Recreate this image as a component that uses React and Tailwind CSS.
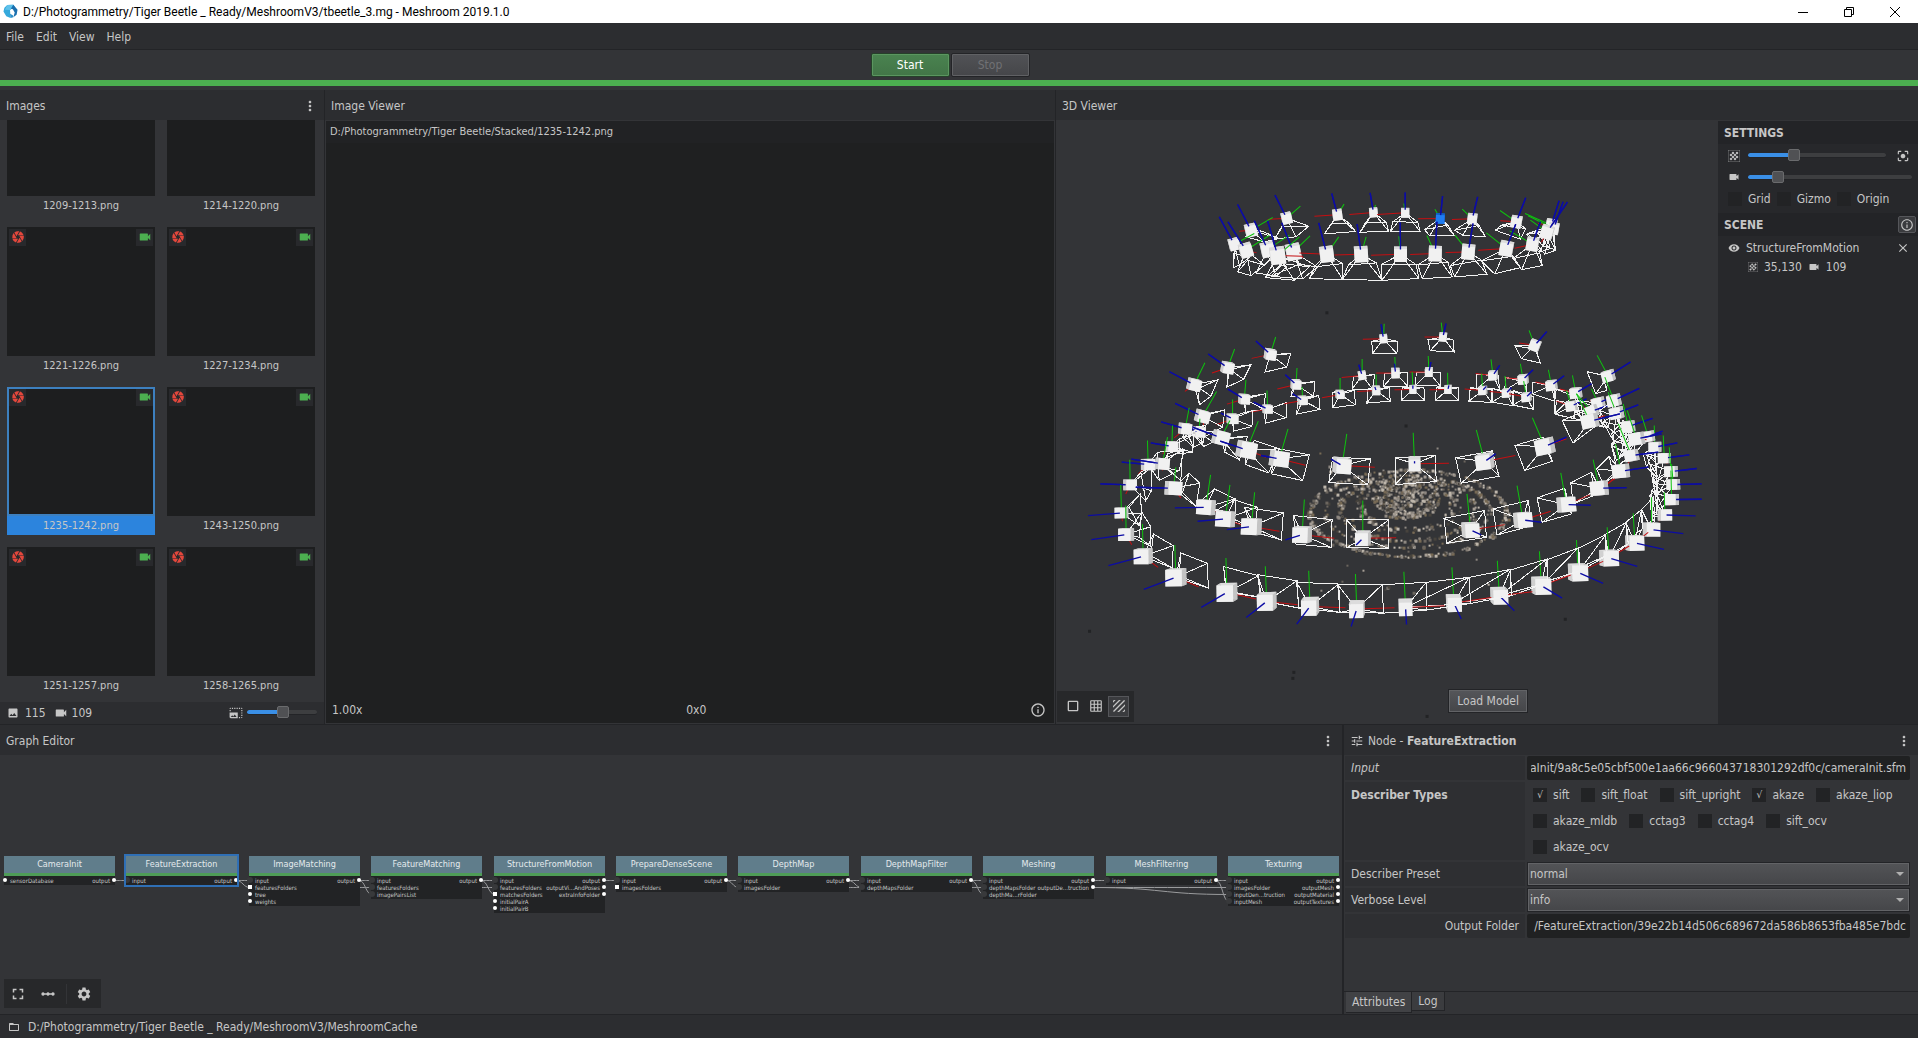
import { useEffect, useRef, useState } from 'react'
import {
  MdCamera, MdCenterFocusStrong, MdClose, MdCropSquare, MdFolderOpen, MdFullscreen, MdGrain, MdGridOn, MdImage,
  MdInfoOutline, MdLinearScale, MdMoreVert, MdPhotoSizeSelectLarge, MdSettings, MdTexture, MdTune, MdVideocam,
  MdVisibility,
} from 'react-icons/md'

const IMAGES = [
  '1209-1213.png', '1214-1220.png',
  '1221-1226.png', '1227-1234.png',
  '1235-1242.png', '1243-1250.png',
  '1251-1257.png', '1258-1265.png',
]

const DESCRIBERS = [
  'sift', 'sift_float', 'sift_upright', 'akaze', 'akaze_liop',
  'akaze_mldb', 'cctag3', 'cctag4', 'sift_ocv', 'akaze_ocv',
]

// input pins: '*' = list pin, '-' = already connected
const NODES = [
  { name: 'CameraInit', inputs: ['sensorDatabase'], outputs: ['output'] },
  { name: 'FeatureExtraction', inputs: ['-input'], outputs: ['output'] },
  { name: 'ImageMatching', inputs: ['-input', '*featuresFolders', 'tree', 'weights'], outputs: ['output'] },
  { name: 'FeatureMatching', inputs: ['-input', '-featuresFolders', '-imagePairsList'], outputs: ['output'] },
  {
    name: 'StructureFromMotion',
    inputs: ['-input', '-featuresFolders', '*matchesFolders', 'initialPairA', 'initialPairB'],
    outputs: ['output', 'outputVi...AndPoses', 'extraInfoFolder'],
  },
  { name: 'PrepareDenseScene', inputs: ['-input', '*imagesFolders'], outputs: ['output'] },
  { name: 'DepthMap', inputs: ['-input', '-imagesFolder'], outputs: ['output'] },
  { name: 'DepthMapFilter', inputs: ['-input', '-depthMapsFolder'], outputs: ['output'] },
  { name: 'Meshing', inputs: ['-input', '-depthMapsFolder', '-depthMa...rFolder'], outputs: ['output', 'outputDe...truction'] },
  { name: 'MeshFiltering', inputs: ['-input'], outputs: ['output'] },
  {
    name: 'Texturing',
    inputs: ['-input', '-imagesFolder', '-inputDen...truction', '-inputMesh'],
    outputs: ['output', 'outputMesh', 'outputMaterial', 'outputTextures'],
  },
]

// [from node, output row, to node, input row]
const EDGES = [
  [0, 0, 1, 0], [1, 0, 2, 0], [1, 0, 2, 1], [2, 0, 3, 0], [2, 0, 3, 2], [2, 1, 3, 1],
  [3, 0, 4, 0], [3, 0, 4, 2], [3, 1, 4, 1], [4, 0, 5, 0], [5, 0, 6, 0], [5, 0, 6, 1],
  [6, 0, 7, 0], [6, 0, 7, 1], [6, 1, 7, 1], [7, 0, 8, 0], [7, 0, 8, 2], [7, 1, 8, 1],
  [8, 0, 9, 0], [8, 1, 10, 1], [8, 1, 10, 2], [9, 0, 10, 0], [9, 0, 10, 3],
]

const nodeX = (i) => Math.round(4 + i * 122.4)

/*
 * Cameras of the reconstruction, in thirds of a viewport pixel:
 * [x, y, size, blue axis end, green axis end, red axis end, four frustum corners]
 */
const TOP_RING = [
  [262, 144, 34, 227, 75, 303, 108, 205, 148, 250, 168, 328, 168, 290, 200, 226, 206],
  [414, 134, 32, 397, 70, 434, 102, 345, 138, 398, 160, 450, 160, 468, 184, 375, 191],
  [522, 127, 28, 512, 68, 528, 104, 450, 133, 498, 158, 560, 156, 568, 184, 482, 186],
  [617, 128, 28, 617, 67, 613, 100, 533, 133, 580, 155, 655, 156, 662, 184, 573, 184],
  [722, 145, 30, 729, 78, 706, 117, 656, 146, 675, 178, 745, 165, 763, 195, 690, 197],
  [818, 146, 32, 834, 80, 788, 117, 757, 148, 765, 180, 838, 166, 858, 200, 790, 195],
  [950, 155, 36, 978, 83, 901, 121, 902, 152, 905, 165, 978, 175, 962, 207, 887, 180],
  [1055, 165, 36, 1078, 92, 976, 130, 1015, 160, 985, 190, 1040, 185, 1068, 240, 1035, 252],
  [1062, 175, 34, 1090, 95, 985, 137, 1030, 170, 1010, 205, 1060, 195, 1066, 238, 1030, 228],
  [1042, 186, 40, 1103, 96, 992, 150, 1025, 216, 980, 192, 1010, 182, 1050, 236, 1022, 245],
  [998, 222, 40, 1022, 155, 930, 182, 945, 234, 940, 265, 1020, 248, 1028, 286, 966, 298],
  [920, 235, 44, 948, 162, 860, 188, 836, 240, 845, 272, 940, 258, 962, 292, 885, 311],
  [155, 180, 38, 115, 103, 220, 142, 120, 183, 140, 200, 185, 182, 240, 205, 195, 215],
  [105, 222, 36, 60, 140, 165, 190, 110, 228, 103, 292, 105, 250, 150, 262, 120, 285],
  [140, 240, 42, 86, 155, 210, 196, 172, 248, 115, 305, 145, 270, 195, 285, 155, 316],
  [205, 238, 44, 165, 152, 270, 195, 240, 250, 170, 308, 210, 270, 262, 290, 230, 318],
  [282, 245, 48, 247, 158, 332, 197, 312, 262, 215, 318, 300, 282, 354, 290, 310, 326],
  [235, 256, 50, 205, 152, 300, 200, 310, 258, 198, 322, 250, 280, 330, 290, 285, 330],
  [382, 252, 46, 358, 158, 418, 200, 300, 248, 345, 290, 430, 280, 430, 328, 330, 325],
  [485, 252, 46, 473, 162, 500, 200, 405, 254, 447, 284, 530, 278, 548, 330, 428, 328],
  [603, 252, 44, 602, 157, 598, 198, 515, 255, 545, 283, 650, 283, 658, 325, 548, 330],
  [707, 250, 44, 712, 155, 682, 196, 632, 253, 655, 284, 745, 276, 758, 320, 668, 325],
  [806, 245, 44, 820, 160, 766, 195, 738, 247, 752, 286, 846, 270, 862, 312, 765, 320],
]

const LEFT_RINGS = [
  [912, 85, 26, 905, 42, 914, 40, 850, 87, 877, 93, 955, 93, 952, 130, 879, 130],
  [573, 132, 34, 530, 92, 589, 80, 517, 144, 572, 135, 634, 130, 622, 170, 557, 185],
  [445, 172, 36, 387, 131, 466, 116, 398, 188, 450, 178, 515, 163, 493, 207, 443, 230],
  [345, 223, 38, 271, 184, 377, 157, 317, 243, 355, 235, 416, 208, 395, 257, 361, 283],
  [650, 222, 30, 618, 193, 653, 173, 594, 236, 642, 218, 706, 214, 703, 258, 635, 258],
  [495, 266, 32, 446, 236, 500, 208, 443, 281, 490, 262, 558, 250, 555, 297, 500, 305],
  [848, 195, 26, 838, 163, 848, 146, 787, 201, 822, 199, 885, 193, 880, 237, 818, 236],
  [948, 188, 28, 945, 160, 946, 140, 890, 188, 915, 190, 983, 187, 985, 228, 912, 228],
  [565, 296, 28, 523, 275, 563, 240, 515, 305, 555, 300, 620, 277, 620, 322, 558, 338],
  [670, 270, 28, 640, 250, 668, 230, 615, 280, 655, 268, 718, 255, 722, 297, 652, 311],
  [782, 252, 26, 775, 245, 782, 203, 728, 262, 760, 245, 825, 240, 828, 283, 760, 292],
  [890, 240, 26, 886, 230, 890, 192, 833, 243, 866, 235, 930, 232, 932, 272, 862, 278],
  [460, 325, 32, 425, 308, 460, 267, 412, 343, 465, 315, 520, 300, 518, 348, 462, 362],
  [370, 318, 40, 288, 279, 412, 243, 373, 345, 385, 310, 437, 298, 430, 350, 375, 380],
  [360, 365, 34, 310, 345, 362, 325, 350, 380, 340, 370, 405, 362, 400, 395, 373, 408],
  [318, 355, 36, 246, 334, 330, 292, 285, 382, 310, 380, 378, 345, 372, 395, 343, 410],
  [278, 408, 34, 215, 397, 280, 345, 250, 430, 300, 385, 345, 372, 340, 425, 300, 430],
  [425, 382, 46, 340, 350, 452, 330, 440, 400, 440, 385, 505, 378, 480, 448, 437, 425],
  [502, 418, 54, 423, 392, 537, 332, 560, 440, 525, 390, 600, 415, 568, 487, 498, 462],
  [600, 445, 52, 545, 435, 626, 355, 678, 464, 585, 412, 690, 433, 670, 510, 577, 490],
  [207, 462, 38, 128, 455, 205, 390, 178, 490, 235, 425, 315, 420, 300, 480, 240, 510],
  [250, 460, 38, 157, 446, 265, 380, 250, 480, 265, 430, 310, 415, 305, 510, 268, 480],
  [153, 523, 36, 64, 520, 152, 448, 140, 550, 185, 485, 217, 470, 217, 540, 200, 570],
  [283, 533, 46, 170, 530, 290, 470, 305, 562, 330, 488, 362, 518, 350, 588, 310, 545],
  [788, 465, 50, 755, 446, 802, 370, 886, 470, 760, 440, 873, 445, 865, 523, 748, 516],
  [127, 607, 36, 27, 615, 125, 523, 130, 632, 183, 550, 188, 610, 180, 645, 150, 590],
  [141, 672, 42, 37, 687, 140, 585, 158, 702, 188, 605, 215, 648, 213, 705, 180, 680],
  [380, 590, 50, 287, 592, 394, 493, 410, 602, 405, 535, 468, 565, 470, 610, 350, 585],
  [438, 625, 52, 355, 632, 452, 523, 500, 648, 465, 568, 535, 590, 525, 655, 410, 600],
  [516, 648, 54, 443, 657, 526, 545, 600, 662, 495, 590, 612, 607, 606, 688, 545, 670],
  [668, 672, 52, 618, 688, 675, 567, 765, 683, 643, 615, 758, 627, 755, 710, 648, 700],
  [850, 683, 44, 830, 703, 850, 570, 950, 681, 802, 628, 928, 628, 928, 713, 802, 711],
  [192, 737, 50, 88, 765, 190, 640, 237, 770, 223, 670, 282, 705, 280, 772, 215, 735],
  [290, 800, 56, 194, 836, 287, 703, 358, 828, 305, 727, 385, 758, 387, 832, 300, 795],
  [443, 845, 56, 366, 890, 440, 742, 530, 865, 433, 768, 538, 795, 545, 860, 440, 840],
  [562, 872, 54, 501, 920, 558, 767, 655, 882, 535, 792, 653, 810, 658, 892, 545, 870],
  [692, 887, 52, 652, 940, 688, 780, 798, 891, 652, 815, 778, 820, 782, 905, 658, 892],
  [832, 895, 48, 815, 947, 828, 790, 945, 891, 775, 822, 908, 822, 912, 907, 782, 905],
]

const RIGHT_RINGS = [
  [160, 80, 26, 169, 40, 155, 37, 105, 80, 115, 88, 190, 88, 194, 125, 122, 121],
  [435, 105, 34, 471, 64, 418, 60, 388, 98, 376, 107, 436, 115, 452, 158, 395, 145],
  [655, 197, 36, 722, 155, 622, 135, 640, 190, 592, 184, 640, 195, 650, 240, 618, 250],
  [118, 185, 26, 124, 155, 116, 137, 60, 185, 80, 187, 152, 187, 152, 227, 78, 225],
  [310, 195, 28, 330, 165, 304, 147, 258, 189, 260, 192, 325, 195, 330, 236, 262, 235],
  [400, 207, 30, 430, 178, 392, 160, 348, 202, 348, 202, 410, 215, 412, 250, 345, 240],
  [485, 225, 32, 523, 196, 476, 178, 437, 215, 430, 215, 500, 232, 495, 272, 427, 250],
  [70, 237, 24, 70, 225, 68, 185, 15, 238, 38, 232, 103, 230, 106, 270, 35, 270],
  [175, 237, 24, 178, 225, 174, 187, 120, 238, 140, 232, 206, 232, 206, 270, 138, 270],
  [279, 240, 26, 290, 228, 276, 190, 225, 236, 242, 232, 305, 236, 306, 276, 238, 272],
  [350, 248, 26, 365, 232, 346, 197, 300, 243, 310, 235, 368, 245, 370, 286, 308, 275],
  [410, 260, 28, 425, 245, 402, 212, 358, 250, 370, 240, 430, 258, 430, 296, 370, 284],
  [558, 248, 34, 605, 220, 548, 195, 510, 236, 495, 235, 565, 262, 552, 325, 495, 310],
  [545, 287, 32, 590, 265, 530, 240, 500, 272, 500, 270, 575, 285, 580, 330, 496, 312],
  [625, 278, 36, 690, 250, 605, 235, 600, 270, 560, 270, 620, 290, 640, 350, 575, 330],
  [605, 302, 36, 670, 280, 560, 250, 580, 290, 555, 300, 620, 320, 650, 350, 590, 335],
  [672, 270, 38, 748, 234, 645, 200, 665, 260, 630, 300, 680, 320, 700, 390, 655, 350],
  [680, 308, 38, 745, 283, 655, 245, 670, 300, 640, 335, 695, 345, 705, 400, 670, 390],
  [715, 348, 36, 788, 324, 700, 280, 720, 360, 665, 370, 700, 330, 720, 420, 690, 440],
  [795, 410, 34, 862, 397, 793, 345, 775, 390, 760, 430, 795, 445, 800, 500, 770, 470],
  [823, 443, 34, 898, 433, 820, 375, 832, 460, 770, 430, 800, 460, 800, 530, 785, 480],
  [843, 483, 36, 920, 474, 838, 410, 840, 500, 780, 460, 805, 500, 800, 560, 790, 520],
  [850, 522, 36, 935, 520, 845, 460, 850, 540, 790, 500, 800, 520, 803, 590, 795, 550],
  [845, 567, 38, 935, 566, 843, 480, 838, 585, 785, 540, 800, 525, 803, 600, 790, 610],
  [825, 613, 38, 917, 616, 823, 545, 808, 632, 780, 555, 797, 540, 800, 610, 785, 620],
  [785, 657, 46, 880, 669, 785, 560, 765, 675, 755, 597, 790, 560, 795, 625, 760, 650],
  [775, 378, 34, 818, 362, 755, 315, 770, 385, 690, 360, 730, 380, 735, 430, 700, 420],
  [740, 385, 42, 815, 370, 712, 300, 770, 388, 665, 400, 700, 370, 720, 420, 680, 450],
  [725, 435, 38, 805, 425, 685, 340, 715, 460, 665, 405, 700, 385, 715, 440, 680, 470],
  [600, 332, 46, 690, 310, 560, 250, 645, 315, 517, 330, 590, 300, 620, 345, 550, 398],
  [693, 482, 46, 775, 470, 677, 400, 655, 520, 620, 475, 658, 438, 670, 490, 640, 520],
  [628, 533, 48, 710, 531, 610, 447, 675, 505, 543, 517, 605, 485, 612, 555, 550, 580],
  [530, 582, 50, 603, 584, 513, 487, 600, 553, 442, 562, 525, 533, 545, 610, 457, 635],
  [400, 628, 50, 455, 635, 382, 525, 483, 602, 310, 595, 415, 570, 428, 645, 322, 673],
  [243, 658, 48, 275, 673, 232, 550, 345, 642, 163, 623, 285, 600, 290, 680, 172, 698],
  [75, 460, 40, 75, 452, 71, 367, 178, 458, 18, 442, 137, 435, 140, 513, 17, 522],
  [285, 453, 50, 318, 430, 260, 358, 377, 435, 198, 442, 308, 421, 328, 497, 215, 518],
  [465, 408, 52, 530, 380, 428, 322, 530, 385, 376, 405, 460, 380, 488, 452, 405, 480],
  [735, 697, 50, 822, 716, 730, 608, 775, 665, 708, 635, 755, 597, 757, 655, 712, 690],
  [658, 742, 52, 742, 767, 652, 650, 718, 706, 645, 672, 710, 635, 715, 700, 650, 735],
  [565, 785, 54, 640, 818, 560, 688, 640, 752, 567, 712, 648, 672, 650, 735, 570, 770],
  [455, 825, 54, 517, 862, 449, 722, 543, 793, 470, 748, 565, 712, 570, 780, 475, 810],
  [329, 855, 50, 374, 900, 323, 750, 428, 843, 362, 778, 472, 745, 475, 815, 365, 855],
  [193, 877, 48, 215, 925, 187, 770, 305, 860, 238, 800, 362, 776, 366, 855, 243, 878],
  [48, 890, 46, 51, 941, 43, 783, 165, 885, 110, 815, 238, 800, 243, 878, 112, 898],
]

// small seeded generator so the sparse cloud is the same on each render
function makeRandom(seed) {
  let s = seed
  return () => {
    s = (s * 16807) % 2147483647
    return s / 2147483647
  }
}

const POINT_COLORS = ['#8d8780', '#a59d94', '#6b655e', '#beb6ab', '#47433d', '#776a55']

function buildCloud() {
  const rand = makeRandom(42)
  const points = []
  const add = (x, y) => points.push([Math.round(x), Math.round(y), POINT_COLORS[Math.floor(rand() * 6)], rand() > 0.6 ? 3 : 2])
  const ring = (n, cx, cy, rx, ry, spread) => {
    for (let i = 0; i < n; i++) {
      const a = rand() * Math.PI * 2
      const k = 1 + (rand() - 0.5) * spread
      add(cx + Math.cos(a) * rx * k, cy + Math.sin(a) * ry * k)
    }
  }
  ring(340, 351, 391, 98, 43, 0.06)
  ring(170, 350, 389, 82, 36, 0.05)
  ring(190, 350, 387, 68, 31, 0.1)
  ring(150, 350, 383, 48, 25, 0.25)
  for (let i = 0; i < 360; i++) {
    const a = rand() * Math.PI * 2
    const r = Math.sqrt(rand())
    add(349 + Math.cos(a) * r * 34, 377 + Math.sin(a) * r * 20)
  }
  // outliers
  for (let i = 0; i < 40; i++) add(260 + rand() * 180, 325 + rand() * 150)
  return points
}

const CLOUD = buildCloud()
const STRAY_POINTS = [[269, 190], [32, 508], [235, 555], [369, 593], [507, 496], [236, 549], [348, 303]]

function CameraShape({ cam, selected }) {
  const [x, y, s, bx, by, gx, gy, rx, ry, ...f] = cam
  const steep = by < y - 30 && Math.abs(bx - x) < Math.abs(by - y)
  const up = steep ? [bx - x, by - y] : [gx - x, gy - y]
  const angle = Math.atan2(up[0], -up[1]) * 0.5
  const len = Math.hypot(bx - x, by - y) || 1
  const depth = (by > y ? 1 : -1) * s * (steep ? 0.09 : 0.13)
  const ox = ((bx - x) / len) * depth
  const oy = ((by - y) / len) * depth
  const h = s * 0.44
  const corners = [[-h, -h], [h, -h], [h, h], [-h, h]].map(([px, py]) => [
    x + px * Math.cos(angle) - py * Math.sin(angle),
    y + px * Math.sin(angle) + py * Math.cos(angle),
  ])
  const front = corners.map(([px, py]) => [px + ox, py + oy])
  const back = corners.map(([px, py]) => [px - ox, py - oy])
  const shades = selected ? ['#0f5fc4', '#1468cf', '#0f5fc4', '#0f5fc4'] : ['#dcdcdc', '#c4c4c4', '#b9b9b9', '#d0d0d0']
  const quad = []
  for (let i = 0; i < 8; i += 2) quad.push([f[i], f[i + 1]])

  return (
    <g fill="none" strokeWidth="3">
      <g stroke="#f2f2f2" strokeWidth="3" shapeRendering="crispEdges">
        <polygon points={quad.join(' ')} />
        {quad.map(([qx, qy], i) => <line key={i} x1={x} y1={y} x2={qx} y2={qy} />)}
      </g>
      <line x1={x} y1={y} x2={rx} y2={ry} stroke="#c50f12" />
      {by <= y && <line x1={x} y1={y} x2={bx} y2={by} stroke="#0c0ca4" strokeWidth="4" />}
      <line x1={x} y1={y} x2={gx} y2={gy} stroke="#0ec30e" />
      <g stroke="none">
        <polygon points={back.join(' ')} fill={shades[0]} />
        {front.map((p, i) => {
          const j = (i + 1) % 4
          return <polygon key={i} points={[p, front[j], back[j], back[i]].join(' ')} fill={shades[i]} />
        })}
        <polygon points={front.join(' ')} fill={selected ? '#1f7cf2' : '#f1f1f1'} />
      </g>
      {by > y && <line x1={x + ox} y1={y + oy} x2={bx} y2={by} stroke="#0c0ca4" strokeWidth="4" />}
      {by <= y && <line x1={x + (bx - x) * 0.15} y1={y + (by - y) * 0.15} x2={bx} y2={by} stroke="#0c0ca4" strokeWidth="4" />}
    </g>
  )
}

function Scene() {
  return (
    <svg viewBox="0 0 661 602" className="block h-full w-full" aria-label="Structure from motion">
      {STRAY_POINTS.map(([x, y], i) => <rect key={i} x={x} y={y} width="3" height="3" fill="#222325" />)}
      {CLOUD.map(([x, y, c, r], i) => <rect key={i} x={x} y={y} width={r} height={r} fill={c} />)}
      <g transform="translate(143 49) scale(0.33333)">
        {TOP_RING.map((cam, i) => <CameraShape key={i} cam={cam} selected={i === 4} />)}
      </g>
      <g transform="translate(23 189) scale(0.33333)">
        {LEFT_RINGS.map((cam, i) => <CameraShape key={i} cam={cam} />)}
        <polygon points="908,822 1040,815 1042,898 912,907" fill="none" stroke="#f2f2f2" strokeWidth="3" shapeRendering="crispEdges" />
      </g>
      <g transform="translate(333 189) scale(0.33333)">
        {RIGHT_RINGS.map((cam, i) => <CameraShape key={i} cam={cam} />)}
      </g>
    </svg>
  )
}

function Slider({ label, initial, className }) {
  const [value, setValue] = useState(initial)
  return (
    <input
      type="range"
      aria-label={label}
      value={value}
      onChange={(e) => setValue(Number(e.target.value))}
      className={`h-[5px] min-w-0 appearance-none rounded-sm border-b border-[#232427] [&::-webkit-slider-thumb]:h-3 [&::-webkit-slider-thumb]:w-3 [&::-webkit-slider-thumb]:appearance-none [&::-webkit-slider-thumb]:rounded-xs [&::-webkit-slider-thumb]:border [&::-webkit-slider-thumb]:border-[#6a6b6d] [&::-webkit-slider-thumb]:bg-[#505154] ${className}`}
      style={{ background: `linear-gradient(to right, #3a8fe6 ${value}%, #3d3e40 ${value}%)` }}
    />
  )
}

function Check({ label, initial = false }) {
  const [checked, setChecked] = useState(initial)
  return (
    <label className="flex items-center gap-1.5">
      <input
        type="checkbox"
        checked={checked}
        onChange={() => setChecked(!checked)}
        className="flex h-3.5 w-3.5 appearance-none items-center justify-center bg-[#222325] text-[10px] leading-none checked:after:content-['√']"
      />
      {label}
    </label>
  )
}

function PanelHeader({ children, menu }) {
  return (
    <header className="flex h-[30px] shrink-0 items-center gap-1 bg-[#2c2d30] px-1.5 pt-0.5">
      {children}
      {menu && (
        <button className="ml-auto" aria-label={menu}>
          <MdMoreVert className="h-4 w-4" />
        </button>
      )}
    </header>
  )
}

function TitleBar() {
  return (
    <div className="flex h-[23px] shrink-0 items-center bg-white pl-[3px] font-[Roboto,sans-serif] text-black">
      <svg viewBox="0 0 16 16" className="h-[15px] w-[15px]">
        <path d="M4.5 1 11 .8 12.5 3 7.5 6.5 8 15 3.5 13 .5 8 1.5 4z" fill="#35a9dc" />
        <path d="M4.5 1 11 .8 7.5 6.5 2 6z" fill="#5fc1ea" />
        <path d="M11 .8 15.5 6 14.5 11.5 11 14 12.5 9 10.5 5.5 8.5 5z" fill="#1b6fae" />
        <path d="M8 15 7.5 10.5 10.5 12 11 14z" fill="#2b8fc9" />
      </svg>
      <h1 className="ml-[5px]">D:/Photogrammetry/Tiger Beetle _ Ready/MeshroomV3/tbeetle_3.mg - Meshroom 2019.1.0</h1>
      <div className="ml-auto flex h-full items-center">
        <button className="flex h-full w-[46px] items-center justify-center" aria-label="Minimize">
          <svg viewBox="0 0 10 10" className="h-2.5 w-2.5" stroke="#000"><path d="M0 5.5h10" /></svg>
        </button>
        <button className="flex h-full w-[46px] items-center justify-center" aria-label="Restore">
          <svg viewBox="0 0 10 10" className="h-2.5 w-2.5" stroke="#000" fill="none"><path d="M.5 2.5h7v7h-7zM2.5 2.5v-2h7v7h-2" /></svg>
        </button>
        <button className="flex h-full w-[46px] items-center justify-center" aria-label="Close">
          <svg viewBox="0 0 10 10" className="h-2.5 w-2.5" stroke="#000"><path d="M0 0l10 10M10 0L0 10" /></svg>
        </button>
      </div>
    </div>
  )
}

function ImagesPanel() {
  const [selected, setSelected] = useState('1235-1242.png')
  return (
    <section className="flex min-h-0 min-w-0 flex-col border-r border-[#232427]">
      <PanelHeader menu="Images menu">Images</PanelHeader>
      {/* gallery is scrolled to the bottom */}
      <div className="flex min-h-0 flex-1 flex-col justify-end overflow-hidden px-[7px] pt-px pb-[7px]">
        <div className="grid shrink-0 grid-cols-[repeat(2,148px)] gap-3">
          {IMAGES.map((name, i) => {
            const active = name === selected
            return (
              <button key={name} onClick={() => setSelected(name)} className={`flex h-[148px] flex-col ${active ? 'bg-[#2c84dd]' : ''}`}>
                <span className={`flex h-[131px] w-full items-start justify-between border-2 bg-[#1d1e1f] ${active ? 'border-[#3d80bf]' : 'border-[#1d1e1f]'}`}>
                  {i > 1 && (
                    <>
                      <span className="flex h-[17px] w-[17px] items-center justify-center bg-[#28292c]">
                        <MdCamera className="h-3.5 w-3.5 text-[#e3473c]" />
                      </span>
                      <span className="flex h-[17px] w-[17px] items-center justify-center bg-[#28292c]">
                        <MdVideocam className="h-3.5 w-3.5 text-[#4caf50]" />
                      </span>
                    </>
                  )}
                </span>
                <span className="w-full text-center text-[11px] leading-[19px]">{name}</span>
              </button>
            )
          })}
        </div>
      </div>
      <footer className="flex h-[22px] shrink-0 items-center bg-[#2c2d30] px-[7px]">
        <MdImage className="h-3 w-3" />
        <span className="ml-1.5">115</span>
        <MdVideocam className="mr-1 ml-2 h-3.5 w-3.5" />
        <span>109</span>
        <MdPhotoSizeSelectLarge className="mr-1 ml-auto h-3.5 w-3.5" />
        <Slider label="Thumbnail size" initial={51} className="w-[70px]" />
      </footer>
    </section>
  )
}

function ImageViewer() {
  return (
    <section className="flex min-h-0 min-w-0 flex-col border-r border-[#232427]">
      <PanelHeader>Image Viewer</PanelHeader>
      <div className="m-px flex min-h-0 flex-1 flex-col justify-between bg-[#1f2021]">
        <div className="flex h-[22px] items-center bg-[#212224] px-1 text-[11px]">D:/Photogrammetry/Tiger Beetle/Stacked/1235-1242.png</div>
        <div className="flex h-[26px] items-center justify-between pr-2 pl-1.5">
          <span>1.00x</span>
          <span>0x0</span>
          <button aria-label="Image details">
            <MdInfoOutline className="h-4 w-4" />
          </button>
        </div>
      </div>
    </section>
  )
}

function Viewer3D() {
  return (
    <section className="flex min-h-0 min-w-0 flex-col">
      <PanelHeader>3D Viewer</PanelHeader>
      <div className="flex min-h-0 flex-1 pt-px">
        <div className="relative min-h-0 min-w-0 flex-1">
          <div className="absolute inset-0"><Scene /></div>
          <div className="absolute bottom-0.5 left-px flex h-[31px] items-center gap-0.5 bg-[#27282a] px-[5px]">
            <button aria-label="Solid" className="flex w-[21px] justify-center"><MdCropSquare className="h-4 w-4" /></button>
            <button aria-label="Wireframe" className="flex w-[21px] justify-center"><MdGridOn className="h-3.5 w-3.5" /></button>
            <button aria-label="Textured" className="flex h-[21px] w-[21px] items-center justify-center border border-[#55565a] bg-[#3a3b3e]">
              <MdTexture className="h-4 w-4" />
            </button>
          </div>
          <button className="absolute right-[190px] bottom-[11px] h-6 border border-[#232427] bg-linear-to-b from-[#55565a] to-[#454649] px-2 inset-ring inset-ring-[#626366]">
            Load Model
          </button>
        </div>
        <aside className="w-[200px] shrink-0 bg-[#27282b]">
          <h2 className="flex h-[23px] items-center bg-[#232427] px-1.5 pt-px font-bold">SETTINGS</h2>
          <div className="flex h-[23px] items-center pr-2 pl-2.5">
            <MdGrain className="h-3 w-3 stroke-current stroke-1" />
            <Slider label="Point size" initial={32} className="mr-2.5 ml-2 flex-1" />
            <button aria-label="Reset view"><MdCenterFocusStrong className="h-3.5 w-3.5" /></button>
          </div>
          <div className="flex h-5 items-center pr-1.5 pl-2.5">
            <MdVideocam className="h-3 w-3" />
            <Slider label="Camera scale" initial={16} className="ml-2 flex-1" />
          </div>
          <div className="flex h-6 items-center gap-1.5 pr-2 pl-2.5">
            <Check label="Grid" />
            <Check label="Gizmo" />
            <Check label="Origin" />
          </div>
          <div className="mt-0.5 flex h-[23px] items-center justify-between bg-[#232427] pr-0.5 pl-1.5">
            <h2 className="font-bold">SCENE</h2>
            <button aria-label="Scene details" className="flex h-[17px] w-[18px] items-center justify-center rounded-xs border border-[#55565a] bg-[#3a3b3e]">
              <MdInfoOutline className="h-3.5 w-3.5" />
            </button>
          </div>
          <div className="mt-0.5 flex h-5 items-center pr-2 pl-2.5">
            <MdVisibility className="mr-1.5 h-3 w-3" />
            StructureFromMotion
            <button className="ml-auto" aria-label="Remove from scene"><MdClose className="h-3.5 w-3.5" /></button>
          </div>
          <div className="flex h-[18px] items-center gap-1.5 pl-[30px]">
            <MdGrain className="h-2.5 w-2.5 stroke-current stroke-1" />
            <span>35,130</span>
            <MdVideocam className="h-3 w-3" />
            <span>109</span>
          </div>
        </aside>
      </div>
    </section>
  )
}

function Pin({ kind }) {
  if (kind === '-') return <i className="h-1.5 w-1.5 shrink-0 rounded-full bg-[#38393b]" />
  if (kind === '*') return <i className="h-1 w-1 shrink-0 bg-white" />
  return <i className="h-1 w-1 shrink-0 rounded-full bg-white" />
}

function GraphNode({ node, index, selected }) {
  return (
    <article
      className={`absolute top-[101px] w-[111px] bg-[#222325] ${selected ? 'outline-2 outline-[#2f6fb5]' : ''}`}
      style={{ left: nodeX(index) }}
    >
      <h3 className="flex h-[17px] items-center justify-center bg-[#607d8b] text-[9px] text-[#e4eaed]">{node.name}</h3>
      <div className="h-[3px] bg-[#4e9c57]" />
      <div className="flex justify-between pt-px pb-px text-[6px] leading-[7px]">
        <ul className="-ml-0.5">
          {node.inputs.map((pin) => (
            <li key={pin} className="flex h-[7px] items-center gap-0.5">
              <span className="flex w-1.5 justify-center"><Pin kind={pin[0]} /></span>
              {pin.replace(/^[-*]/, '')}
            </li>
          ))}
        </ul>
        <ul className="-mr-px">
          {node.outputs.map((pin) => (
            <li key={pin} className="flex h-[7px] items-center justify-end gap-0.5">{pin}<Pin /></li>
          ))}
        </ul>
      </div>
    </article>
  )
}

function GraphEditor() {
  return (
    <section className="flex min-h-0 min-w-0 flex-col border-r-2 border-[#232427]">
      <PanelHeader menu="Graph menu">Graph Editor</PanelHeader>
      <div className="relative min-h-0 flex-1 overflow-hidden">
        <svg className="absolute inset-0 h-full w-full" fill="none" stroke="#9a9b9d">
          {EDGES.map(([from, out, to, input], i) => {
            const x1 = nodeX(from) + 110
            const y1 = 125.5 + out * 7
            const x2 = nodeX(to) + 1
            const y2 = 125.5 + input * 7
            const mid = (x1 + x2) / 2
            return <path key={i} d={`M${x1} ${y1}C${mid} ${y1} ${mid} ${y2} ${x2} ${y2}`} />
          })}
        </svg>
        {NODES.map((node, i) => <GraphNode key={node.name} node={node} index={i} selected={i === 1} />)}
        <div className="absolute bottom-1.5 left-1 flex h-[29px] items-center bg-[#27282a]">
          <button className="flex w-7 justify-center" aria-label="Fit"><MdFullscreen className="h-[18px] w-[18px]" /></button>
          <button className="flex w-8 justify-center" aria-label="Auto layout"><MdLinearScale className="h-4 w-4" /></button>
          <span className="ml-0.5 h-5 w-px bg-[#333437]" />
          <button className="flex w-[34px] justify-center" aria-label="Graph settings"><MdSettings className="h-4 w-4" /></button>
        </div>
      </div>
    </section>
  )
}

function AttributeRow({ id, label, labelClass = '', children }) {
  return (
    <div className="grid grid-cols-[180fr_383fr] gap-0.5">
      <label htmlFor={id} className={`bg-[#2e2f32] px-1.5 leading-6 ${labelClass}`}>{label}</label>
      {children}
    </div>
  )
}

// Long paths keep their end in view
function PathField({ id, value }) {
  const ref = useRef(null)
  useEffect(() => {
    ref.current.scrollLeft = ref.current.scrollWidth
  }, [])
  return <input id={id} ref={ref} readOnly defaultValue={value} className="h-6 w-full min-w-0 rounded-xs border-x-4 border-[#202122] bg-[#202122] text-right" />
}

function Select({ id, options }) {
  return (
    <div className="relative">
      <select id={id} className="block h-6 w-full appearance-none border border-[#232427] bg-linear-to-b from-[#535457] to-[#454649] px-0.5 inset-ring inset-ring-[#626366]">
        {options.map((o) => <option key={o}>{o}</option>)}
      </select>
      <svg viewBox="0 0 8 4" className="pointer-events-none absolute top-2.5 right-1.5 h-1 w-2" fill="#b0b0b0"><path d="M0 0h8L4 4z" /></svg>
    </div>
  )
}

function NodeEditor() {
  const [tab, setTab] = useState('Attributes')
  return (
    <section className="flex min-h-0 min-w-0 flex-col">
      <PanelHeader menu="Node menu">
        <MdTune className="h-3.5 w-3.5" />
        <span>Node - <b>FeatureExtraction</b></span>
      </PanelHeader>
      <div className="flex min-h-0 flex-1 flex-col gap-0.5 pt-px pr-2 pl-px">
        <AttributeRow id="input" label="Input" labelClass="italic">
          <PathField id="input" value="aInit/9a8c5e05cbf500e1aa66c966043718301292df0c/cameraInit.sfm" />
        </AttributeRow>
        <div className="grid grid-cols-[180fr_383fr] gap-0.5">
          <span id="describers" className="bg-[#2e2f32] px-1.5 py-px font-bold leading-6">Describer Types</span>
          <div role="group" aria-labelledby="describers" className="flex h-[78px] flex-wrap content-start gap-x-3 px-1.5">
            {DESCRIBERS.map((d) => (
              <div key={d} className="flex h-[26px] items-center">
                <Check label={d} initial={d === 'sift' || d === 'akaze'} />
              </div>
            ))}
          </div>
        </div>
        <AttributeRow id="preset" label="Describer Preset">
          <Select id="preset" options={['normal']} />
        </AttributeRow>
        <AttributeRow id="verbose" label="Verbose Level">
          <Select id="verbose" options={['info']} />
        </AttributeRow>
        <AttributeRow id="output" label="Output Folder" labelClass="text-right">
          <PathField id="output" value="/FeatureExtraction/39e22b14d506c689672da586b8653fba485e7bdc" />
        </AttributeRow>
      </div>
      <div className="flex h-[23px] items-start border-t border-[#232427] px-0.5">
        {['Attributes', 'Log'].map((name) => (
          <button
            key={name}
            onClick={() => setTab(name)}
            className={`border-r border-b border-[#232427] px-1.5 ${tab === name ? 'h-[21px] bg-[#414245]' : 'h-[19px] bg-[#3b3c3f]'}`}
          >
            {name}
          </button>
        ))}
      </div>
    </section>
  )
}

export default function App() {
  return (
    <div className="flex h-screen flex-col overflow-hidden bg-[#333437] font-['DejaVu_Sans_Condensed','DejaVu_Sans',sans-serif] text-[12px] leading-4 text-[#c6c6c6]">
      <TitleBar />
      <nav className="flex h-[27px] shrink-0 items-center gap-3 border-b border-[#232427] bg-[#2c2d30] px-1.5 pt-0.5">
        {['File', 'Edit', 'View', 'Help'].map((m) => <button key={m}>{m}</button>)}
      </nav>
      <div className="flex h-[30px] shrink-0 items-center justify-center gap-px pr-[18px]">
        <button className="h-6 w-[79px] rounded-xs border border-[#26402a] bg-linear-to-b from-[#4a8350] to-[#427547] text-white inset-ring inset-ring-[#5a965f]">Start</button>
        <button disabled className="h-6 w-[79px] rounded-xs border border-[#232427] bg-linear-to-b from-[#515256] to-[#454649] text-[#707174] inset-ring inset-ring-[#606164]">Stop</button>
      </div>
      <div className="h-1.5 shrink-0 bg-[#4caf50]" />
      <main className="flex min-h-0 flex-1 flex-col pt-1">
        <div className="grid min-h-0 flex-[636] grid-cols-[325fr_731fr_862fr] grid-rows-[minmax(0,1fr)]">
          <ImagesPanel />
          <ImageViewer />
          <Viewer3D />
        </div>
        <div className="grid min-h-0 flex-[290] grid-cols-[1344fr_574fr] grid-rows-[minmax(0,1fr)] border-y border-[#232427]">
          <GraphEditor />
          <NodeEditor />
        </div>
      </main>
      <footer className="flex h-[23px] shrink-0 items-center gap-2 bg-[#2c2d30] px-2">
        <MdFolderOpen className="h-3 w-3" />
        D:/Photogrammetry/Tiger Beetle _ Ready/MeshroomV3/MeshroomCache
      </footer>
    </div>
  )
}
